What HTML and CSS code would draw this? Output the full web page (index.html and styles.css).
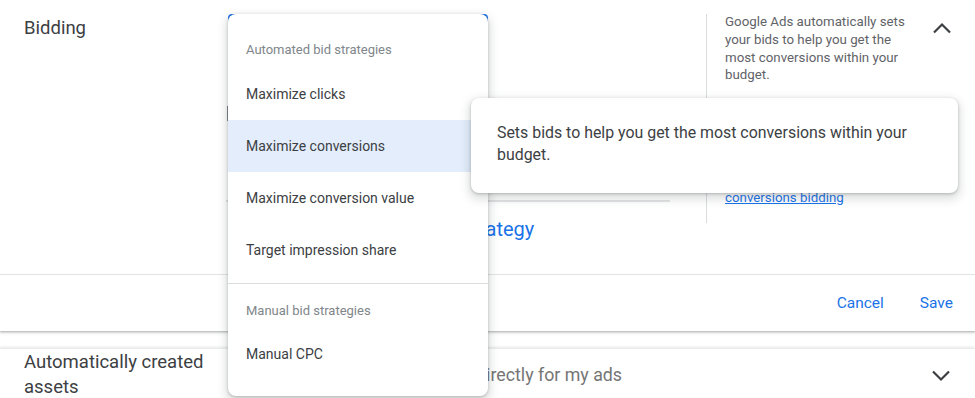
FILE: index.html
```html
<!DOCTYPE html>
<html lang="en">
<head>
<meta charset="utf-8">
<title>Bidding</title>
<link rel="stylesheet" href="styles.css">
</head>
<body>
<div class="page">
  <section class="card bidding">
    <div class="bid-main">
      <div class="label">Bidding</div>
      <div class="field-col">
        <div class="select-field"></div>
        <div class="cursor-bar"></div>
        <div class="rule"></div>
        <a class="strategy-link">Select a different bid strategy</a>
      </div>
      <aside class="help">
        <p class="help-text">Google Ads automatically sets your bids to help you get the most conversions within your budget.</p>
        <a class="help-link">Learn more about maximize conversions bidding</a>
      </aside>
      <button class="chev" aria-label="Collapse">
        <svg width="20" height="12" viewBox="0 0 20 12"><polyline points="2,10.5 10,2.5 18,10.5" fill="none" stroke="#3c4043" stroke-width="2.2"/></svg>
      </button>
    </div>
    <div class="actions">
      <button class="text-btn">Cancel</button>
      <button class="text-btn">Save</button>
    </div>
  </section>

  <section class="card assets">
    <div class="label">Automatically created assets</div>
    <div class="value">Create assets directly for my ads</div>
    <button class="chev" aria-label="Expand">
      <svg width="20" height="12" viewBox="0 0 20 12"><polyline points="2,1.5 10,9.5 18,1.5" fill="none" stroke="#3c4043" stroke-width="2.2"/></svg>
    </button>
  </section>

  <div class="menu">
    <div class="menu-header first">Automated bid strategies</div>
    <div class="menu-item">Maximize clicks</div>
    <div class="menu-item selected">Maximize conversions</div>
    <div class="menu-item">Maximize conversion value</div>
    <div class="menu-item">Target impression share</div>
    <div class="menu-divider"></div>
    <div class="menu-header">Manual bid strategies</div>
    <div class="menu-item">Manual CPC</div>
  </div>

  <div class="tooltip">Sets bids to help you get the most conversions within your budget.</div>
</div>
</body>
</html>
```

FILE: styles.css
```css
* { box-sizing: border-box; }
html, body { margin: 0; padding: 0; background: #fff; }
body {
  font-family: Roboto, "Noto Sans", Arial, sans-serif;
  color: #3c4043;
  width: 975px;
  height: 398px;
  overflow: hidden;
}
.page { position: relative; width: 975px; height: 398px; }

.card { background: #fff; }
.bidding {
  box-shadow: 0 1px 2px rgba(60,64,67,.3), 0 1px 3px 1px rgba(60,64,67,.15);
}
.bid-main {
  display: flex;
  height: 275px;
  border-bottom: 1px solid #e3e3e3;
}
.label {
  width: 226px;
  padding-left: 24px;
  font-size: 18.5px;
  line-height: 25px;
  color: #3c4043;
}
.bidding .label { padding-top: 16px; }

.field-col {
  width: 480px;
  display: flex;
  flex-direction: column;
  align-items: flex-start;
}
.select-field {
  margin-top: 14px;
  margin-left: 2px;
  width: 260px;
  height: 44px;
  border: 2px solid #1a73e8;
  border-radius: 4px;
}
.cursor-bar {
  margin-top: 48px;
  margin-left: 1px;
  width: 1.5px;
  height: 15px;
  background: #80868b;
}
.rule {
  margin-top: 79px;
  width: 444px;
  height: 2px;
  background: #e3e4e6;
}
.strategy-link {
  margin-top: 14px;
  margin-left: 48px;
  font-size: 20px;
  line-height: 26px;
  color: #1a73e8;
  white-space: nowrap;
}

.help {
  margin-top: 14px;
  height: 209px;
  width: 226px;
  border-left: 1px solid #dadce0;
  padding-left: 18px;
  padding-right: 10px;
  font-size: 13.3px;
  line-height: 17.8px;
  color: #5f6368;
}
.help-text { margin: -1px 0 0; }
.help-link {
  display: block;
  margin-top: 87px;
  color: #1a73e8;
  text-decoration: underline;
}

.chev {
  border: 0;
  background: none;
  padding: 0;
  margin: 22px 0 0 0;
  width: 20px;
  height: 12px;
  display: flex;
}

.actions {
  height: 56px;
  display: flex;
  justify-content: flex-end;
  align-items: center;
  padding-right: 14px;
  gap: 20px;
}
.text-btn {
  border: 0;
  background: none;
  font-family: Roboto, "Noto Sans", Arial, sans-serif;
  font-size: 15.5px;
  color: #1a73e8;
  padding: 0 8px;
  line-height: 20px;
}

.assets {
  margin-top: 17px;
  display: flex;
  box-shadow: 0 -1px 2px rgba(60,64,67,.12);
  border-top: 1px solid #ececec;
  height: 60px;
}
.assets .label { padding-top: 1px; width: 230px; }
.value {
  width: 474px;
  padding-left: 133px;
  padding-top: 14px;
  font-size: 17.8px;
  line-height: 24px;
  color: #757575;
  white-space: nowrap;
}
.assets .chev { margin: 21px 0 0 227px; }

.menu {
  position: absolute;
  left: 228px;
  top: 14px;
  width: 260px;
  height: 382px;
  background: #fff;
  border-radius: 8px;
  box-shadow: 0 1px 3px rgba(60,64,67,.3), 0 4px 8px 3px rgba(60,64,67,.15);
}
.menu-header {
  padding-left: 18px;
  font-size: 13px;
  line-height: 16px;
  color: #80868b;
  height: 44px;
  padding-top: 19px;
}
.menu-header.first { height: 54px; padding-top: 28px; }
.menu-item {
  height: 52px;
  display: flex;
  align-items: center;
  padding-left: 18px;
  font-size: 14px;
  color: #3c4043;
}
.menu-item.selected { background: #e3edfc; }
.menu-divider {
  margin-top: 7px;
  height: 1px;
  background: #dadce0;
}

.tooltip {
  position: absolute;
  left: 471px;
  top: 98px;
  width: 487px;
  height: 95px;
  padding: 24px 26px 0 26px;
  background: #fff;
  border-radius: 8px;
  box-shadow: 0 1px 3px rgba(60,64,67,.3), 0 4px 8px 3px rgba(60,64,67,.15);
  font-size: 15.9px;
  line-height: 22px;
  color: #3c4043;
}
```
